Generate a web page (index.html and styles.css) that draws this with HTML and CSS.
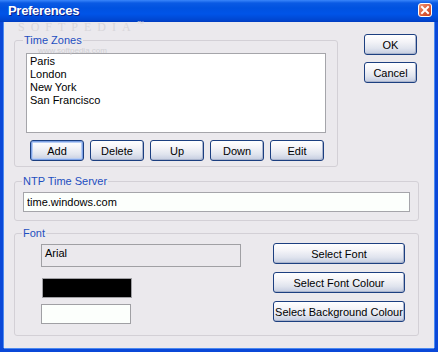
FILE: index.html
```html
<!DOCTYPE html>
<html lang="en">
<head>
    <meta charset="UTF-8">
    <title>Preferences</title>
    <link rel="stylesheet" href="styles.css">
</head>
<body>
    <div class="window">
        <div class="titlebar">
            <span class="title">Preferences</span>
            <span class="close">
                <svg width="14" height="14" viewBox="0 0 14 14">
                    <defs>
                        <linearGradient id="cg" x1="0" y1="0" x2="1" y2="1">
                            <stop offset="0" stop-color="#f09a7c"/>
                            <stop offset="0.5" stop-color="#e0613c"/>
                            <stop offset="1" stop-color="#c23a1c"/>
                        </linearGradient>
                    </defs>
                    <rect x="0.5" y="0.5" width="13" height="13" rx="2.5" fill="url(#cg)" stroke="#fff"/>
                    <path d="M4 4 L10 10 M10 4 L4 10" stroke="#fff" stroke-width="2" stroke-linecap="square"/>
                </svg>
            </span>
        </div>

        <div class="client">
            <div class="top-row">
                <fieldset class="group tz">
                    <legend>Time Zones</legend>
                    <div class="tz-body">
                        <ul class="listbox">
                            <li>Paris</li>
                            <li>London</li>
                            <li>New York</li>
                            <li>San Francisco</li>
                        </ul>
                        <div class="btn-row">
                            <button class="btn default">Add</button>
                            <button class="btn">Delete</button>
                            <button class="btn">Up</button>
                            <button class="btn">Down</button>
                            <button class="btn">Edit</button>
                        </div>
                    </div>
                </fieldset>
                <div class="side-buttons">
                    <button class="btn">OK</button>
                    <button class="btn">Cancel</button>
                </div>
            </div>

            <fieldset class="group ntp">
                <legend>NTP Time Server</legend>
                <div class="ntp-body">
                    <input class="textbox" type="text" value="time.windows.com">
                </div>
            </fieldset>

            <fieldset class="group font">
                <legend>Font</legend>
                <div class="font-body">
                    <div class="font-left">
                        <div class="font-name">Arial</div>
                        <div class="swatch fore"></div>
                        <div class="swatch back"></div>
                    </div>
                    <div class="font-right">
                        <button class="btn wide">Select Font</button>
                        <button class="btn wide">Select Font Colour</button>
                        <button class="btn wide">Select Background Colour</button>
                    </div>
                </div>
            </fieldset>
        </div>

        <div class="watermark">SOFTPEDIA<sup>™</sup></div>
        <div class="watermark-url">www.softpedia.com</div>
    </div>
</body>
</html>
```

FILE: styles.css
```css
body {
    margin: 0;
    font-family: "Liberation Sans", Arial, sans-serif;
    font-size: 11px;
}
.window {
    position: relative;
    width: 438px;
    height: 352px;
    box-sizing: border-box;
    background: #0a48d8;
    overflow: hidden;
}
.titlebar {
    height: 22px;
    display: flex;
    align-items: center;
    justify-content: space-between;
    padding: 0 6px 0 8px;
    box-sizing: border-box;
    background: linear-gradient(#3a86fa 0, #0a5ae4 3px, #0052e0 8px, #0054e8 14px, #0046d0 20px, #003cc0 22px);
}
.title {
    color: #fff;
    font-weight: bold;
    font-size: 13px;
    letter-spacing: -0.3px;
    text-shadow: 1px 1px #0a1f8c;
    margin-top: -2px;
}
.close {
    display: flex;
    margin-top: -2px;
}
.client {
    background: #ebe9ed;
    margin: 0 4px 4px 4px;
    height: 326px;
    padding: 12px 0 0 10px;
    box-sizing: border-box;
    box-shadow: -1px 0 0 #4c8af0, 1px 0 0 #4c8af0, 0 1px 0 #4c8af0;
}
.top-row {
    display: flex;
    align-items: flex-start;
}
.group {
    margin: 0;
    padding: 0;
    border: 1px solid #d3d0d6;
    border-radius: 3px;
    box-sizing: border-box;
}
.group legend {
    margin-left: 7px;
    padding: 0 1px;
    color: #1e4fc0;
    line-height: 13px;
}
.tz {
    width: 324px;
}
.tz legend {
    margin-left: 8px;
}
.tz-body {
    padding: 6px 10px 5px 11px;
}
.listbox {
    list-style: none;
    margin: 0;
    width: 300px;
    height: 80px;
    box-sizing: border-box;
    padding: 1px 3px;
    background: #fff;
    border: 1px solid #a5a5aa;
}
.listbox li {
    line-height: 13px;
}
.btn-row {
    display: flex;
    gap: 6px;
    margin-top: 7px;
    padding-left: 4px;
}
.btn {
    width: 54px;
    height: 21px;
    padding: 0;
    font-family: inherit;
    font-size: 11px;
    color: #000;
    border: 1px solid #1c3f80;
    border-radius: 3px;
    background: linear-gradient(#ffffff 0%, #f4f4f8 35%, #e0e4ee 70%, #c4cce0 100%);
    box-shadow: inset -1px -1px 0 #aab4cc;
}
.btn.default {
    box-shadow: inset 0 0 0 1px #7ea2e6, inset 0 0 0 2px #b8cdf3;
}
.side-buttons {
    display: flex;
    flex-direction: column;
    gap: 7px;
    margin-left: 26px;
}
.side-buttons .btn {
    width: 53px;
}
.ntp {
    width: 405px;
    margin-top: 8px;
}
.ntp-body {
    padding: 4px 8px 8px 8px;
}
.textbox {
    display: block;
    width: 387px;
    height: 20px;
    box-sizing: border-box;
    margin: 0;
    padding: 0 3px;
    font-family: inherit;
    font-size: 11px;
    border: 1px solid #a5a5aa;
    background: #fcfffc;
}
.font {
    width: 405px;
    margin-top: 6px;
}
.font-body {
    display: flex;
    padding: 4px 0 11px 26px;
}
.font-name {
    width: 200px;
    height: 23px;
    box-sizing: border-box;
    padding: 2px 3px;
    border: 1px solid #a0a0a4;
}
.swatch {
    width: 90px;
    height: 20px;
    box-sizing: border-box;
    border: 1px solid #a0a0a4;
}
.swatch.fore {
    background: #000;
    margin: 11px 0 0 1px;
}
.swatch.back {
    background: #fcfffc;
    margin-top: 6px;
}
.font-right {
    display: flex;
    flex-direction: column;
    gap: 8px;
    margin: -1px 0 0 32px;
}
.btn.wide {
    width: 132px;
}
.watermark {
    position: absolute;
    left: 18px;
    top: 21px;
    font-family: "Liberation Serif", serif;
    font-size: 12px;
    line-height: 12px;
    color: #d8d6da;
    letter-spacing: 6px;
    pointer-events: none;
}
.watermark sup {
    font-size: 7px;
    line-height: 0;
    letter-spacing: 0;
    font-family: "Liberation Sans", sans-serif;
}
.watermark-url {
    position: absolute;
    left: 38px;
    top: 47px;
    font-size: 8px;
    line-height: 8px;
    color: #d0d0d4;
    pointer-events: none;
}
```
